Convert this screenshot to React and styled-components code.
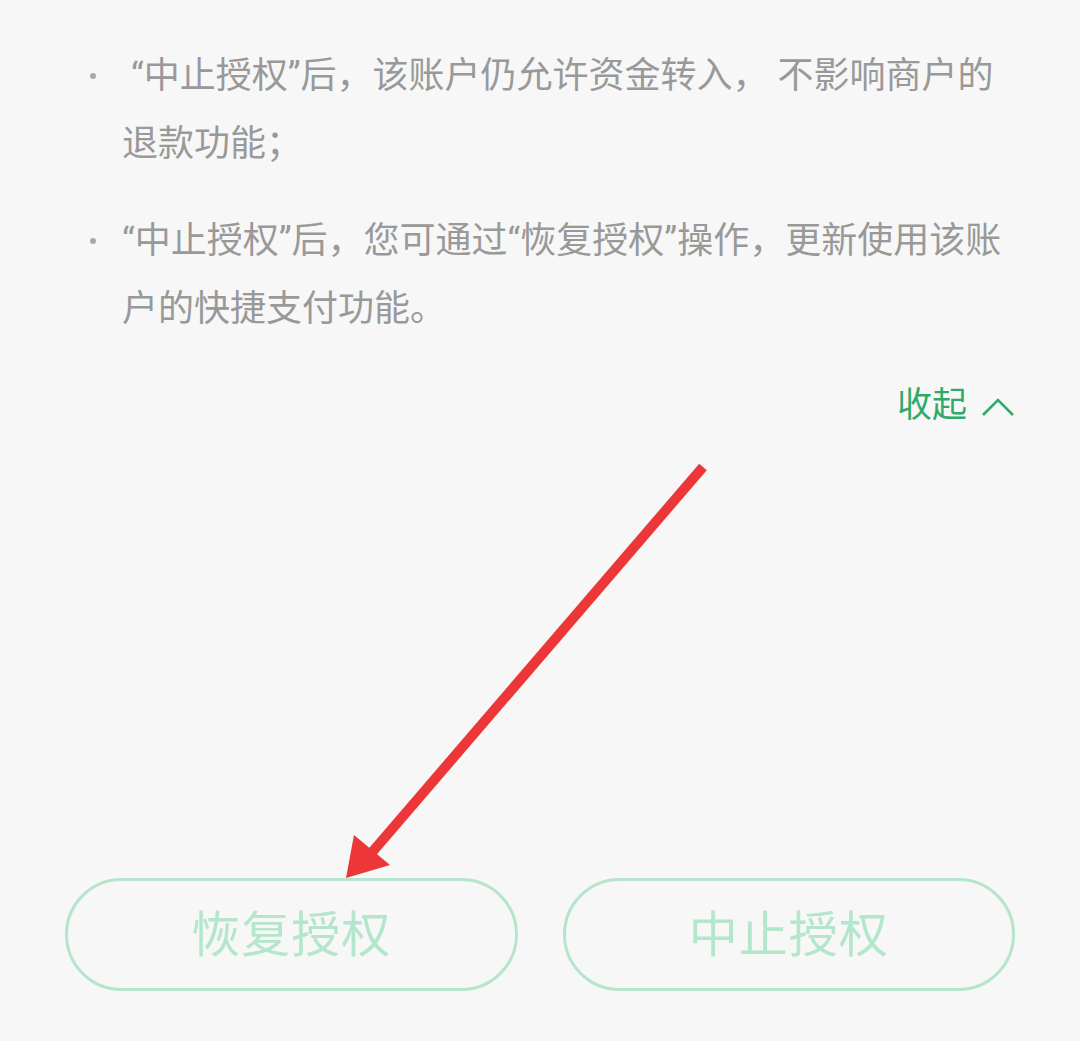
import React from "react";
import styled, { createGlobalStyle } from "styled-components";

const GlobalStyle = createGlobalStyle`
  html, body {
    margin: 0;
    padding: 0;
    background: #f7f7f7;
  }
  body {
    font-family: Roboto, "Noto Sans CJK SC", sans-serif;
  }
`;

const Page = styled.div`
  position: relative;
  width: 1080px;
  height: 1041px;
  box-sizing: border-box;
  padding: 42px 65px 0 65px;
  background: #f7f7f7;
  overflow: hidden;
`;

const List = styled.ul`
  list-style: none;
  margin: 0;
  padding: 0;
  display: flex;
  flex-direction: column;
  gap: 29px;
`;

const Item = styled.li`
  display: flex;
  font-size: 36px;
  line-height: 68px;
  color: #999999;
`;

const Bullet = styled.span`
  flex: 0 0 57px;
  height: 68px;
  display: flex;
  align-items: center;
  padding-left: 25px;
  box-sizing: border-box;

  &::before {
    content: "";
    width: 6px;
    height: 6px;
    border-radius: 50%;
    background: #a8a8a8;
  }
`;

const ItemText = styled.span`
  width: 890px;
`;

const CollapseRow = styled.div`
  display: flex;
  justify-content: flex-end;
  margin-top: 29px;
`;

const Collapse = styled.button`
  display: flex;
  align-items: center;
  gap: 14px;
  border: none;
  background: none;
  padding: 0;
  font-family: inherit;
  font-size: 35px;
  line-height: 68px;
  color: #2fab69;
  cursor: pointer;
`;

const Actions = styled.div`
  display: flex;
  gap: 45px;
  margin-top: 438px;
`;

const ActionButton = styled.button`
  flex: 1;
  height: 113px;
  border-radius: 57px;
  border: 3px solid #b5e5cb;
  background: transparent;
  padding: 0 0 8px;
  font-family: inherit;
  font-size: 49px;
  letter-spacing: 1px;
  color: #b3e6cb;
  cursor: pointer;
`;

const Annotation = styled.svg`
  position: absolute;
  left: 0;
  top: 0;
  pointer-events: none;
`;

const items = [
  "\u00a0“中止授权”后，该账户仍允许资金转入， 不影响商户的退款功能；",
  "“中止授权”后，您可通过“恢复授权”操作，更新使用该账户的快捷支付功能。",
];

export default function App() {
  return (
    <>
      <GlobalStyle />
      <Page>
        <List>
          {items.map((t, i) => (
            <Item key={i}>
              <Bullet />
              <ItemText>{t}</ItemText>
            </Item>
          ))}
        </List>
        <CollapseRow>
          <Collapse>
            收起
            <svg width="34" height="22" viewBox="0 0 34 22">
              <polyline
                points="2,20 17,5 32,20"
                fill="none"
                stroke="#2fab69"
                strokeWidth="2.6"
              />
            </svg>
          </Collapse>
        </CollapseRow>
        <Actions>
          <ActionButton>恢复授权</ActionButton>
          <ActionButton>中止授权</ActionButton>
        </Actions>
        <Annotation width="1080" height="1041" viewBox="0 0 1080 1041">
          <line x1="703" y1="467" x2="368" y2="857" stroke="#ec3638" strokeWidth="10" />
          <polygon points="346,878 354,835 390,865" fill="#ec3638" />
        </Annotation>
      </Page>
    </>
  );
}
